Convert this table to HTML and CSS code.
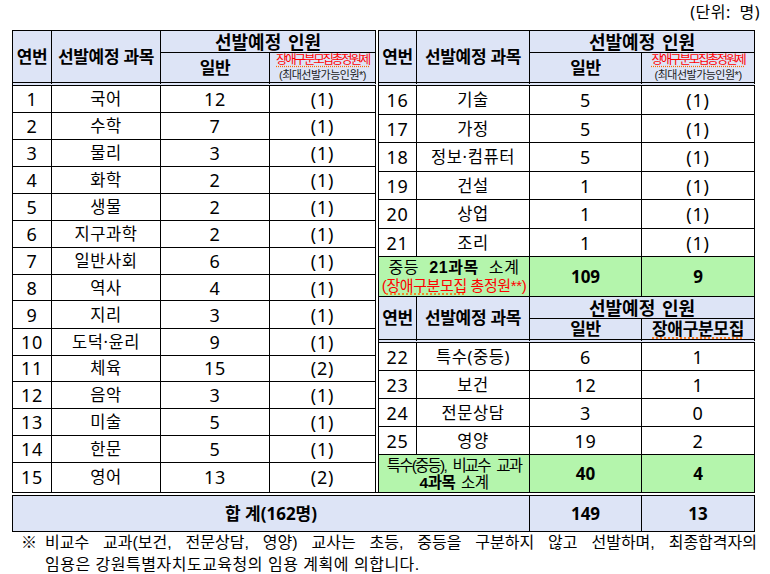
FILE: index.html
```html
<!DOCTYPE html>
<html lang="ko">
<head>
<meta charset="utf-8">
<title>선발예정 인원</title>
<link rel="stylesheet" href="styles.css">
</head>
<body>
<div class="page">
  <div class="unit">(단위: 명)</div>
  <div class="tables">
    <table class="t t-left">
      <colgroup><col class="lc1"><col class="lc2"><col class="lc3"><col class="lc4"></colgroup>
      <tr class="h1">
        <th rowspan="2" class="hb">연번</th>
        <th rowspan="2" class="hb">선발예정 과목</th>
        <th colspan="2" class="big">선발예정 인원</th>
      </tr>
      <tr class="h2">
        <th class="hb">일반</th>
        <th class="hb dis"><span class="red-s">장애구분모집총정원제</span><span class="sub-s">(최대선발가능인원*)</span></th>
      </tr>
      <tr class="r27"><td>1</td><td class="sj">국어</td><td>12</td><td>(1)</td></tr>
      <tr class="r27"><td>2</td><td class="sj">수학</td><td>7</td><td>(1)</td></tr>
      <tr class="r27"><td>3</td><td class="sj">물리</td><td>3</td><td>(1)</td></tr>
      <tr class="r27"><td>4</td><td class="sj">화학</td><td>2</td><td>(1)</td></tr>
      <tr class="r27"><td>5</td><td class="sj">생물</td><td>2</td><td>(1)</td></tr>
      <tr class="r27"><td>6</td><td class="sj">지구과학</td><td>2</td><td>(1)</td></tr>
      <tr class="r27"><td>7</td><td class="sj">일반사회</td><td>6</td><td>(1)</td></tr>
      <tr class="r26"><td>8</td><td class="sj">역사</td><td>4</td><td>(1)</td></tr>
      <tr class="r27"><td>9</td><td class="sj">지리</td><td>3</td><td>(1)</td></tr>
      <tr class="r27"><td>10</td><td class="sj">도덕·윤리</td><td>9</td><td>(1)</td></tr>
      <tr class="r26"><td>11</td><td class="sj">체육</td><td>15</td><td>(2)</td></tr>
      <tr class="r27"><td>12</td><td class="sj">음악</td><td>3</td><td>(1)</td></tr>
      <tr class="r27"><td>13</td><td class="sj">미술</td><td>5</td><td>(1)</td></tr>
      <tr class="r27"><td>14</td><td class="sj">한문</td><td>5</td><td>(1)</td></tr>
      <tr class="r29 last"><td>15</td><td class="sj">영어</td><td>13</td><td>(2)</td></tr>
    </table>

    <table class="t t-right">
      <colgroup><col class="rc1"><col class="rc2"><col class="rc3"><col class="rc4"></colgroup>
      <tr class="h1">
        <th rowspan="2" class="hb">연번</th>
        <th rowspan="2" class="hb">선발예정 과목</th>
        <th colspan="2" class="big">선발예정 인원</th>
      </tr>
      <tr class="h2">
        <th class="hb">일반</th>
        <th class="hb dis"><span class="red-s">장애구분모집총정원제</span><span class="sub-s">(최대선발가능인원*)</span></th>
      </tr>
      <tr class="r29"><td>16</td><td class="sj">기술</td><td>5</td><td>(1)</td></tr>
      <tr class="r28"><td>17</td><td class="sj">가정</td><td>5</td><td>(1)</td></tr>
      <tr class="r29"><td>18</td><td class="sj">정보·컴퓨터</td><td>5</td><td>(1)</td></tr>
      <tr class="r28"><td>19</td><td class="sj">건설</td><td>1</td><td>(1)</td></tr>
      <tr class="r29"><td>20</td><td class="sj">상업</td><td>1</td><td>(1)</td></tr>
      <tr class="r28"><td>21</td><td class="sj">조리</td><td>1</td><td>(1)</td></tr>
      <tr class="sub1 green">
        <td colspan="2" class="glabel"><span class="gl1">중등 <b>21과목</b> 소계</span><span class="gl2">(<u class="sq">장애구분모집</u> 총정원**)</span></td>
        <td class="num">109</td>
        <td class="num">9</td>
      </tr>
      <tr class="h1b">
        <th rowspan="2" class="hb">연번</th>
        <th rowspan="2" class="hb">선발예정 과목</th>
        <th colspan="2" class="big">선발예정 인원</th>
      </tr>
      <tr class="h2b">
        <th class="hb">일반</th>
        <th class="hb"><u class="sq">장애구분모집</u></th>
      </tr>
      <tr class="r28"><td>22</td><td class="sj">특수(중등)</td><td>6</td><td>1</td></tr>
      <tr class="r28"><td>23</td><td class="sj">보건</td><td>12</td><td>1</td></tr>
      <tr class="r28"><td>24</td><td class="sj">전문상담</td><td>3</td><td>0</td></tr>
      <tr class="r28"><td>25</td><td class="sj">영양</td><td>19</td><td>2</td></tr>
      <tr class="sub2 green last">
        <td colspan="2" class="glabel"><span class="gl3">특수(중등), 비교수 교과</span><span class="gl4"><b>4과목</b> 소계</span></td>
        <td class="num">40</td>
        <td class="num">4</td>
      </tr>
    </table>
  </div>

  <table class="t total">
    <colgroup><col class="tc1"><col class="tc2"><col class="tc3"></colgroup>
    <tr>
      <td class="num">합 계(162명)</td>
      <td class="num">149</td>
      <td class="num">13</td>
    </tr>
  </table>

  <div class="note">
    <div class="mark">※</div>
    <div class="nbody">
      <div class="b1">비교수 교과(보건, 전문상담, 영양) 교사는 초등, 중등을 구분하지 않고 선발하며, 최종합격자의</div>
      <div class="b2">임용은 강원특별자치도교육청의 임용 계획에 의합니다.</div>
    </div>
  </div>
</div>
</body>
</html>
```

FILE: styles.css
```css
* { box-sizing: border-box; }

body {
  margin: 0;
  background: #fff;
  color: #000;
  font-family: "Noto Sans", "Noto Sans CJK KR", sans-serif;
}

.page { padding-left: 12px; }

.unit {
  width: 748px;
  height: 30px;
  text-align: right;
  font-size: 16px;
  line-height: 24px;
  letter-spacing: 0.5px;
  word-spacing: 4px;
}

.tables {
  display: flex;
  gap: 2px;
  width: 743px;
  border-bottom: 1px solid #000;
}

.t {
  border-collapse: separate;
  border-spacing: 0;
  table-layout: fixed;
  border-left: 1px solid #000;
  border-top: 1px solid #000;
}

.t-left { width: 364px; }
.t-right { width: 377px; }

.lc1 { width: 39px; }
.lc2 { width: 109px; }
.lc3 { width: 109px; }
.lc4 { width: 106px; }

.rc1 { width: 38px; }
.rc2 { width: 113px; }
.rc3 { width: 112px; }
.rc4 { width: 113px; }

.t th,
.t td {
  padding: 0;
  border-right: 1px solid #000;
  border-bottom: 1px solid #000;
  text-align: center;
  vertical-align: middle;
  white-space: nowrap;
}

.t td {
  font-size: 18px;
  line-height: 20px;
  font-weight: 400;
  letter-spacing: 0.8px;
}

.t th {
  background: #dde4f6;
  font-size: 17px;
  line-height: 20px;
  font-weight: 700;
  letter-spacing: -0.3px;
}

.t th.big {
  font-size: 18px;
  letter-spacing: 0;
  word-spacing: 2px;
}

.t .hb { border-bottom: 4px double #000; }

.h1 { height: 22px; }
.h2 { height: 33px; }
.h1b { height: 22px; }
.h2b { height: 22px; }

.r26 { height: 26px; }
.r27 { height: 27px; }
.r28 { height: 28px; }
.r29 { height: 29px; }

.t .last td { border-bottom: 0; }

.t td.sj {
  font-size: 16.5px;
  letter-spacing: 0.6px;
}

.dis { line-height: 14px; }

.red-s,
.sub-s,
.gl1,
.gl2,
.gl3,
.gl4,
.note {
  font-family: "Liberation Sans", "Noto Sans CJK KR", sans-serif;
}

.red-s {
  display: block;
  color: #ff0000;
  font-size: 12.5px;
  line-height: 15px;
  letter-spacing: -2.2px;
  font-weight: 400;
  text-decoration: underline dotted #ff6a00;
  text-underline-offset: 2px;
}

.sub-s {
  display: block;
  color: #222;
  font-size: 11px;
  line-height: 14px;
  letter-spacing: -0.5px;
  font-weight: 400;
}

.sq {
  text-decoration: underline dotted #ff6a00;
  text-underline-offset: 3px;
}

.green td { background: #b4f5ac; }

.sub1 { height: 40px; }
.sub2 { height: 37px; }

.t td.glabel { line-height: 18px; letter-spacing: 0; }

.gl1 {
  display: block;
  font-size: 16px;
  line-height: 18px;
  letter-spacing: 0.6px;
  word-spacing: 5px;
}

.gl2 {
  display: block;
  color: #ff0000;
  font-size: 15px;
  line-height: 18px;
  letter-spacing: -0.4px;
}

.gl3 {
  display: block;
  font-size: 15.5px;
  line-height: 17px;
  letter-spacing: -1.8px;
  word-spacing: 4px;
}

.gl4 {
  display: block;
  font-size: 15.5px;
  line-height: 17px;
  letter-spacing: -0.5px;
  word-spacing: 2px;
}

.t td.num {
  font-weight: 700;
  font-size: 17px;
  letter-spacing: 0;
}

.total {
  width: 743px;
  margin-top: 2px;
  border-bottom: 1px solid #000;
}

.total tr { height: 35px; }
.total td { background: #dde4f6; }
.total td { border-bottom: 0; }

.tc1 { width: 517px; }
.tc2 { width: 112px; }
.tc3 { width: 113px; }

.note {
  display: flex;
  margin-left: 9px;
  font-size: 16px;
  line-height: 22px;
}

.mark {
  width: 24px;
  flex: none;
}

.nbody {
  width: 712px;
  flex: none;
}

.b1 {
  text-align: justify;
  text-align-last: justify;
}

.b2 {
  letter-spacing: 0.5px;
}
```
